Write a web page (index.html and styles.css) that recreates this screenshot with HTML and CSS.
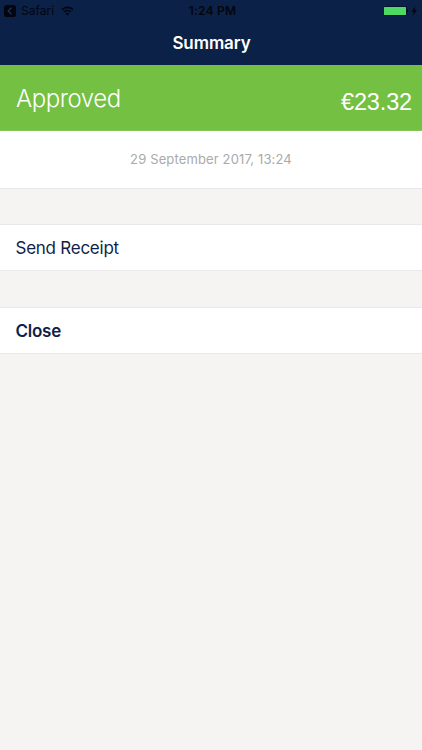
FILE: index.html
```html
<!DOCTYPE html>
<html lang="en">
<head>
<meta charset="utf-8">
<title>Summary</title>
<link rel="stylesheet" href="styles.css">
</head>
<body>
<header class="header">
  <div class="status">
    <div class="status-left">
      <svg class="back" viewBox="0 0 12 12"><rect width="12" height="12" rx="2.5" fill="#03060f"/><path d="M7.5 2.8 4.3 6l3.2 3.2" fill="none" stroke="#1b2c58" stroke-width="1.5"/></svg>
      <span class="safari">Safari</span>
      <svg class="wifi" viewBox="0 0 14 10"><g fill="none" stroke="#03060f" stroke-width="1.7"><path d="M1 3.5Q7-1.2 13 3.5"/><path d="M3.2 6Q7 3 10.8 6"/></g><path d="M4.9 7.6Q7 6.1 9.1 7.6L7 9.8z" fill="#03060f"/></svg>
    </div>
    <span class="time">1:24 PM</span>
    <div class="status-right">
      <svg class="battery" viewBox="0 0 34 12"><rect x=".5" y="1.5" width="22" height="9" rx="1" fill="#03060f"/><rect x="0" y="2" width="22" height="8" rx=".5" fill="#4cda64"/><path d="M23 4q2 2 0 4z" fill="#03060f"/><path d="M31.5 1.5 27.3 6.8h2.4L28.5 10.8 33 5.2h-2.6z" fill="#03060f"/></svg>
    </div>
  </div>
  <h1 class="title">Summary</h1>
</header>
<main>
  <section class="result">
    <span class="state">Approved</span>
    <span class="amount">€23.32</span>
  </section>
  <div class="date"><span>29 September 2017, 13:24</span></div>
  <div class="row"><span class="send">Send Receipt</span></div>
  <div class="row"><span class="close">Close</span></div>
</main>
</body>
</html>
```
FILE: styles.css
```css
* { box-sizing: border-box; }
body {
  margin: 0;
  min-height: 750px;
  background: #f5f4f3;
  color: #111f49;
  font-family: Inter, "Liberation Sans", sans-serif;
}
.header { height: 65px; background: #0c2148; }
.status {
  display: grid;
  grid-template-columns: 1fr auto 1fr;
  align-items: center;
  height: 21px;
  padding: 0 1px 0 4px;
  color: #03060f;
  font-size: 12px;
  line-height: 20px;
}
.status-left { display: flex; align-items: center; }
.back { width: 12px; height: 12px; margin-right: 5px; }
.wifi { width: 13px; height: 10px; margin-left: 7px; }
.time { font-weight: 600; letter-spacing: .2px; }
.status-right { display: flex; justify-content: flex-end; padding-right: 3px; }
.battery { width: 34px; height: 12px; }
.title {
  margin: 0;
  padding-left: 1px;
  color: #fff;
  font-size: 17px;
  font-weight: 600;
  letter-spacing: -.1px;
  line-height: 44px;
  text-align: center;
}
.result {
  display: flex;
  justify-content: space-between;
  height: 66px;
  padding: 0 10px 0 16px;
  border-bottom: 1px solid #83c65c;
  background: #73c043;
  color: #fff;
}
.state { font-size: 24px; font-weight: 300; letter-spacing: -.45px; line-height: 68px; }
.amount { font-family: "Liberation Sans", sans-serif; font-size: 23.5px; letter-spacing: -.15px; line-height: 75px; }
.date {
  height: 58px;
  border-bottom: 1px solid #e9e8e8;
  background: #fff;
  color: #aaa;
  font-size: 13px;
  letter-spacing: .14px;
  line-height: 56px;
  text-align: center;
}
.row {
  height: 47px;
  margin-top: 35px;
  padding-left: 15.5px;
  border: 1px solid #eae9e9;
  border-width: 1px 0;
  background: #fff;
  font-size: 17px;
  line-height: 46px;
}
.row + .row { margin-top: 36px; }
.send { letter-spacing: -.25px; }
.close { font-weight: 600; letter-spacing: -.25px; }
```
